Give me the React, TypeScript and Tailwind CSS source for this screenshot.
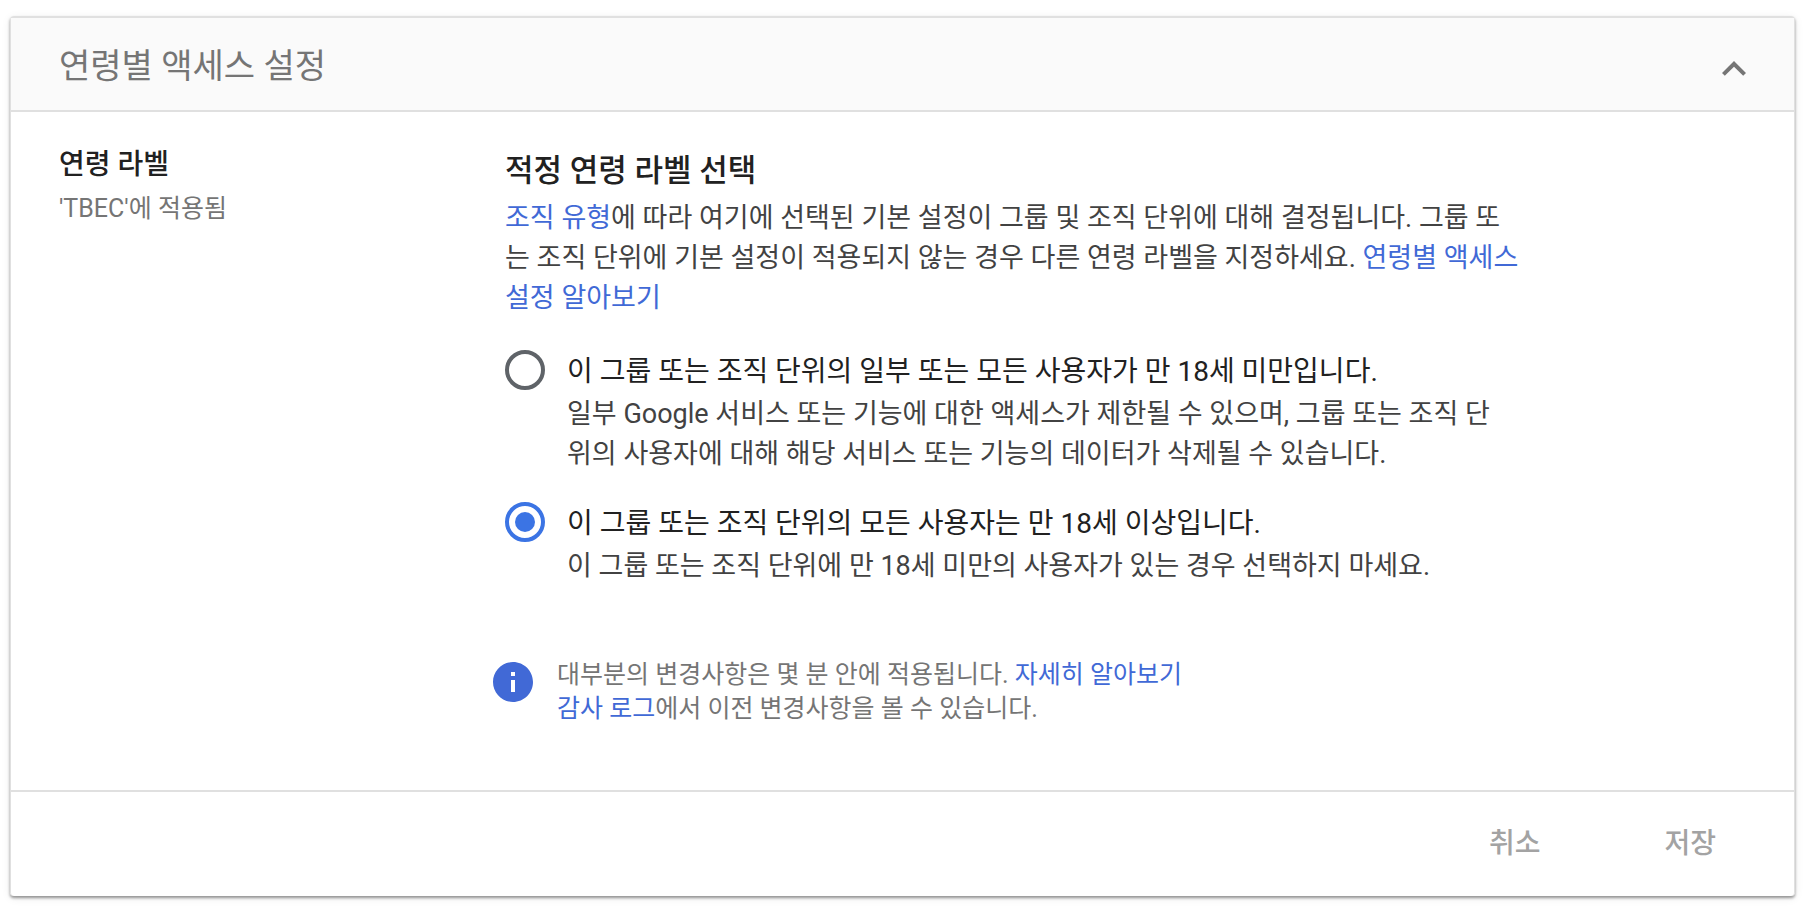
import { useState } from 'react';

interface OptionProps {
	id: string;
	title: string;
	description: string;
	checked: boolean;
	onSelect: () => void;
}

const RadioOption = ({ id, title, description, checked, onSelect }: OptionProps) => {
	return (
		<div className="flex items-start gap-[22px] pr-4">
			<input
				type="radio"
				id={id}
				name="age-label"
				checked={checked}
				onChange={onSelect}
				aria-describedby={id + '-description'}
				className="grid h-10 w-10 shrink-0 appearance-none place-content-center rounded-full border-4 border-[#5f6368] checked:border-[#3b74e4] checked:before:h-5 checked:before:w-5 checked:before:rounded-full checked:before:bg-[#3b74e4] checked:before:content-['']"
			/>
			<div className="flex flex-col">
				<label htmlFor={id} className="text-[28px] leading-[44px] text-[#212121]">
					{title}
				</label>
				<p id={id + '-description'} className="break-all text-[27px] leading-10 text-[#424242]">
					{description}
				</p>
			</div>
		</div>
	);
};

const TextLink = ({ children }: { children: string }) => (
	<a href="#" className="text-[#4169d6]">
		{children}
	</a>
);

const App = () => {
	const [selected, setSelected] = useState('adult');
	const [open, setOpen] = useState(true);

	return (
		<main className="bg-white px-[10px] pt-4 pr-[17px] pb-3 font-[Roboto,'Noto_Sans_CJK_KR',sans-serif]">
			<section className="rounded-sm border-x border-t-2 border-[#e0e0e0] shadow-[0_2px_3px_rgba(0,0,0,0.4),0_2px_10px_rgba(0,0,0,0.08)]">
				<header className="flex h-[94px] items-center justify-between border-b-2 border-[#e0e0e0] bg-[#fafafa] pt-1 pr-9 pl-12">
					<h1 className="text-[34px] leading-[48px] text-[#757575]">연령별 액세스 설정</h1>
					<button
						type="button"
						aria-label="접기"
						aria-expanded={open}
						onClick={() => setOpen(!open)}
						className="pt-1.5"
					>
						<svg viewBox="0 0 24 24" className="h-12 w-12" fill="#757575">
							<path d="M12 8l-6 6 1.41 1.41L12 10.83l4.59 4.58L18 14z" />
						</svg>
					</button>
				</header>

				{open && (
					<div className="flex pt-[33px] pr-[270px] pb-16 pl-12">
						<div className="w-[446px] shrink-0">
							<h2 className="text-[28px] leading-10 font-medium text-[#212121]">연령 라벨</h2>
							<p className="mt-1.5 text-[25px] leading-9 text-[#757575]">'TBEC'에 적용됨</p>
						</div>

						<div className="min-w-0 flex-1">
							<h2 className="mt-1 text-[31px] leading-[44px] font-medium text-[#212121]">적정 연령 라벨 선택</h2>
							<p className="mt-[5px] break-all text-[27px] leading-10 text-[#424242]">
								<TextLink>조직 유형</TextLink>에 따라 여기에 선택된 기본 설정이 그룹 및 조직 단위에 대해 결정됩니다. 그룹 또는 조직
								단위에 기본 설정이 적용되지 않는 경우 다른 연령 라벨을 지정하세요.{' '}
								<TextLink>연령별 액세스 설정 알아보기</TextLink>
							</p>

							<fieldset className="mt-8 flex flex-col gap-7">
								<RadioOption
									id="minor"
									title="이 그룹 또는 조직 단위의 일부 또는 모든 사용자가 만 18세 미만입니다."
									description="일부 Google 서비스 또는 기능에 대한 액세스가 제한될 수 있으며, 그룹 또는 조직 단위의 사용자에 대해 해당 서비스 또는 기능의 데이터가 삭제될 수 있습니다."
									checked={selected === 'minor'}
									onSelect={() => setSelected('minor')}
								/>
								<RadioOption
									id="adult"
									title="이 그룹 또는 조직 단위의 모든 사용자는 만 18세 이상입니다."
									description="이 그룹 또는 조직 단위에 만 18세 미만의 사용자가 있는 경우 선택하지 마세요."
									checked={selected === 'adult'}
									onSelect={() => setSelected('adult')}
								/>
							</fieldset>

							<div className="mt-[72px] -ml-4 flex items-start gap-5">
								<svg viewBox="0 0 24 24" className="h-12 w-12 shrink-0" fill="#4169d6">
									<path d="M12 2C6.48 2 2 6.48 2 12s4.48 10 10 10 10-4.48 10-10S17.52 2 12 2zm1 15h-2v-6h2v6zm0-8h-2V7h2v2z" />
								</svg>
								<p className="text-[25px] leading-[34px] text-[#757575]">
									대부분의 변경사항은 몇 분 안에 적용됩니다. <TextLink>자세히 알아보기</TextLink>
									<br />
									<TextLink>감사 로그</TextLink>에서 이전 변경사항을 볼 수 있습니다.
								</p>
							</div>
						</div>
					</div>
				)}

				<footer className="flex h-[106px] items-center justify-end gap-[92px] border-t-2 border-[#e0e0e0] pr-[62px] text-[28px] font-medium text-[#a3a3a3]">
					<button type="button" className="px-4 py-1">
						취소
					</button>
					<button type="button" className="px-4 py-1">
						저장
					</button>
				</footer>
			</section>
		</main>
	);
};

export default App;
